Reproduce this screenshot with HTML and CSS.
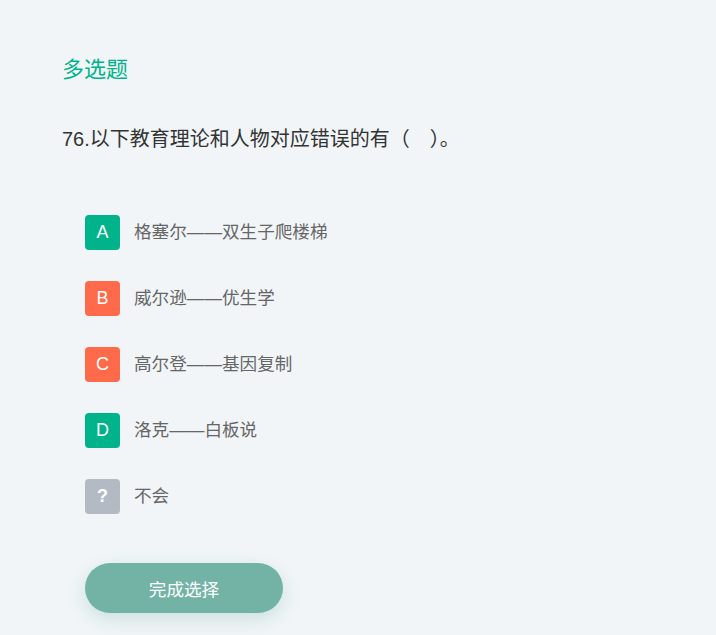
FILE: index.html
```html
<!DOCTYPE html>
<html lang="zh">
<head>
<meta charset="utf-8">
<title>多选题</title>
<link rel="stylesheet" href="styles.css">
</head>
<body>
<div class="page">
  <div class="title">多选题</div>
  <div class="question">76.以下教育理论和人物对应错误的有（　）。</div>
  <ul class="options">
    <li class="option"><span class="badge green">A</span><span class="text">格塞尔——双生子爬楼梯</span></li>
    <li class="option"><span class="badge orange">B</span><span class="text">威尔逊——优生学</span></li>
    <li class="option"><span class="badge orange">C</span><span class="text">高尔登——基因复制</span></li>
    <li class="option"><span class="badge green">D</span><span class="text">洛克——白板说</span></li>
    <li class="option"><span class="badge gray">?</span><span class="text">不会</span></li>
  </ul>
  <button class="submit">完成选择</button>
</div>
</body>
</html>
```
FILE: styles.css
```css
html, body {
  margin: 0;
  padding: 0;
  background: #f1f5f8;
  font-family: "Liberation Sans", "Noto Sans CJK SC", sans-serif;
}
.page {
  padding: 55px 0 0 62px;
  height: 580px;
}
.title {
  font-size: 22px;
  line-height: 30px;
  color: #00b38a;
}
.question {
  margin-top: 39px;
  font-size: 20px;
  line-height: 30px;
  color: #333333;
}
.options {
  list-style: none;
  margin: 61px 0 0 0;
  padding: 0 0 0 23px;
  display: flex;
  flex-direction: column;
  gap: 31px;
}
.option {
  display: flex;
  align-items: center;
  gap: 14px;
  height: 35px;
}
.badge {
  width: 35px;
  height: 35px;
  border-radius: 4px;
  display: flex;
  align-items: center;
  justify-content: center;
  color: #ffffff;
  font-size: 18px;
  font-family: "Liberation Sans", sans-serif;
}
.badge.green { background: #00b38a; }
.badge.orange { background: #ff6a4b; }
.badge.gray { background: #b4bac4; font-weight: bold; }
.text {
  font-size: 17.6px;
  color: #666666;
  line-height: 35px;
}
.submit {
  margin: 49px 0 0 23px;
  width: 198px;
  height: 50px;
  border: none;
  border-radius: 25px;
  background: #73b3a6;
  color: #ffffff;
  font-family: "Liberation Sans", "Noto Sans CJK SC", sans-serif;
  font-size: 17.6px;
  box-shadow: 0 6px 18px rgba(115, 179, 166, 0.3);
  cursor: pointer;
}
```
